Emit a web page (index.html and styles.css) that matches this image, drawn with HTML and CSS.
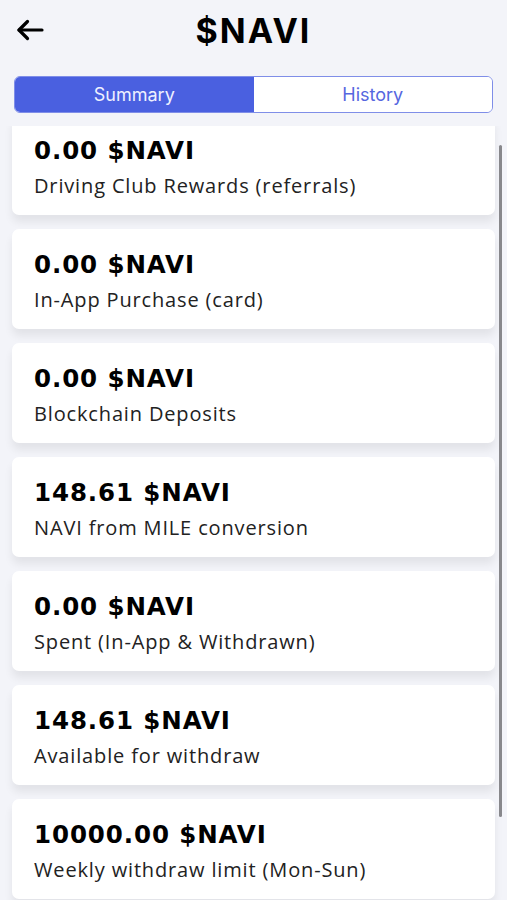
FILE: index.html
```html
<!DOCTYPE html>
<html lang="en">
<head>
<meta charset="utf-8">
<title>$NAVI</title>
<link rel="stylesheet" href="styles.css">
</head>
<body>
<div class="app">
  <header class="topbar">
    <button class="back" aria-label="Back">
      <svg width="28" height="22" viewBox="0 0 28 22" fill="none" stroke="#000" stroke-width="3.2" stroke-linecap="round" stroke-linejoin="round">
        <path d="M26 11H3"/>
        <path d="M11.5 2.5L3 11l8.5 8.5"/>
      </svg>
    </button>
    <h1 class="title">$NAVI</h1>
    <span class="spacer"></span>
  </header>

  <nav class="segment">
    <button class="seg seg-active">Summary</button>
    <button class="seg">History</button>
  </nav>

  <div class="viewport">
    <div class="list">
      <div class="card"><div class="amount">0.00 $NAVI</div><div class="label">Driving Club Rewards (referrals)</div></div>
      <div class="card"><div class="amount">0.00 $NAVI</div><div class="label">In-App Purchase (card)</div></div>
      <div class="card"><div class="amount">0.00 $NAVI</div><div class="label">Blockchain Deposits</div></div>
      <div class="card"><div class="amount">148.61 $NAVI</div><div class="label">NAVI from MILE conversion</div></div>
      <div class="card"><div class="amount">0.00 $NAVI</div><div class="label">Spent (In-App &amp; Withdrawn)</div></div>
      <div class="card"><div class="amount">148.61 $NAVI</div><div class="label">Available for withdraw</div></div>
      <div class="card"><div class="amount">10000.00 $NAVI</div><div class="label">Weekly withdraw limit (Mon-Sun)</div></div>
    </div>
    <div class="scrollbar"></div>
  </div>
</div>
</body>
</html>
```

FILE: styles.css
```css
* { box-sizing: border-box; }
html, body { margin: 0; padding: 0; }
body {
  background: #f3f4f9;
  font-family: Inter, "Noto Sans", sans-serif;
  color: #000;
  width: 507px;
  height: 900px;
  overflow: hidden;
}
.app { display: flex; flex-direction: column; height: 900px; }
.topbar {
  display: grid;
  grid-template-columns: 60px 1fr 60px;
  align-items: center;
  height: 60px;
}
.back {
  border: 0; background: none; padding: 0 0 0 16px;
  display: flex; align-items: center; height: 60px;
}
.title {
  margin: 0;
  text-align: center;
  font-size: 34px;
  font-weight: 700;
  letter-spacing: 2px;
}
.segment {
  display: flex;
  margin: 16px 14px 0;
  height: 37px;
  border: 1.5px solid #7f8ee8;
  border-radius: 6px;
  overflow: hidden;
  background: #fff;
}
.seg {
  flex: 1;
  border: 0;
  background: #fff;
  color: #5667df;
  font-family: Inter, "Noto Sans", sans-serif;
  font-size: 18px;
  padding: 0;
}
.seg-active { background: #4a60e0; color: #eef0ff; }
.viewport {
  position: relative;
  flex: 1;
  margin-top: 13px;
  overflow: hidden;
}
.list {
  display: flex;
  flex-direction: column;
  gap: 14px;
  padding: 0 12px;
  margin-top: -11px;
}
.card {
  background: #fff;
  border-radius: 7px;
  height: 100px;
  padding: 20px 22px 0;
  box-shadow: 0 7px 8px rgba(0,0,0,0.07);
}
.amount {
  font-family: "DejaVu Sans", sans-serif;
  font-size: 24.5px;
  font-weight: 700;
  line-height: 32px;
  letter-spacing: 0.9px;
}
.label {
  font-family: "Open Sans", sans-serif;
  font-size: 20px;
  line-height: 28px;
  letter-spacing: 0.85px;
  color: #222;
  margin-top: 5px;
}
.scrollbar {
  position: absolute;
  right: 5px;
  top: 19px;
  width: 3px;
  height: 672px;
  border-radius: 2px;
  background: #88888c;
}
```
